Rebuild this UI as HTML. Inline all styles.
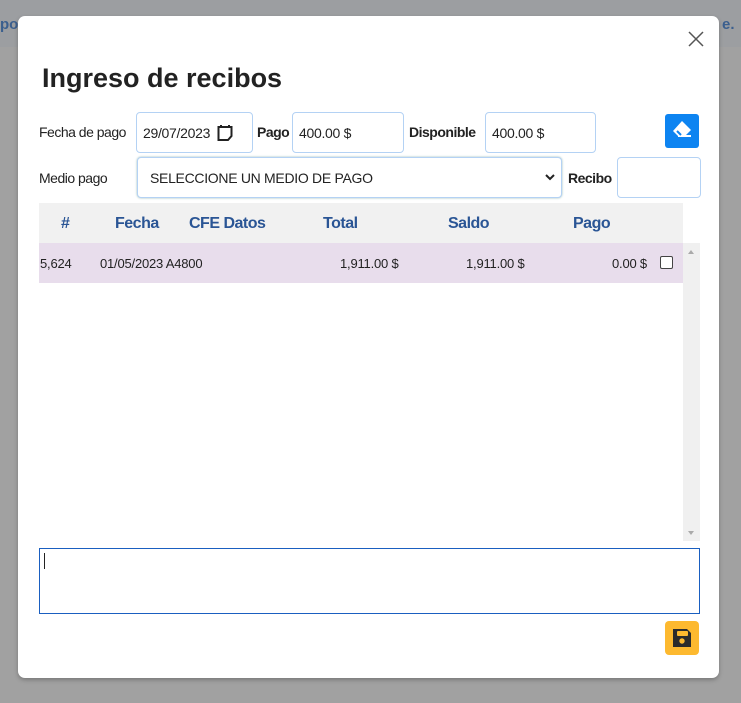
<!DOCTYPE html>
<html><head><style>
body{margin:0;width:741px;height:703px;background:#a1a1a1;position:relative;overflow:hidden;font-family:"Liberation Sans",sans-serif;}
.band{position:absolute;left:0;top:0;width:741px;height:47px;background:#9c9ea1;}
.modal{position:absolute;left:18px;top:16px;width:701px;height:662px;background:#fff;border-radius:7px;box-shadow:0 2px 4px rgba(0,0,0,.25);}
.a{position:absolute;}
.lbl{font-size:14px;color:#222;letter-spacing:-0.5px}
.inp{border:1px solid #b4d2f4;border-radius:4px;background:#fff;font-size:14px;color:#222;box-sizing:border-box;padding-left:6px;display:flex;align-items:center;letter-spacing:-0.3px}
.th{font-size:16px;font-weight:bold;color:#2a5595;top:215px;letter-spacing:-0.5px}
.td{font-size:13px;color:#222;top:256px;letter-spacing:-0.2px}
</style></head><body>
<div class="band"></div>
<div class="a" style="left:0;top:16px;font-size:15px;color:#3b5f8e;font-weight:bold">po</div>
<div class="a" style="left:722px;top:16px;font-size:15px;color:#3b5f8e;font-weight:bold">e.</div>
<div class="modal"></div>
<svg class="a" style="left:688px;top:31px" width="16" height="16"><path d="M1 1L15 15M15 1L1 15" stroke="#555" stroke-width="1.5"/></svg>
<div class="a" style="left:42px;top:63px;font-size:27px;font-weight:bold;color:#222">Ingreso de recibos</div>
<div class="a lbl" style="left:39px;top:124px">Fecha de pago</div>
<div class="a inp" style="left:136px;top:112px;width:117px;height:41px">29/07/2023
<svg style="margin-left:7px" width="16" height="18"><path d="M1.5 3H14.5V12L11 16H1.5Z" fill="none" stroke="#222" stroke-width="2"/><path d="M4 1v3M12 1v3" stroke="#222" stroke-width="2"/></svg></div>
<div class="a lbl" style="left:257px;top:124px;font-weight:bold">Pago</div>
<div class="a inp" style="left:292px;top:112px;width:112px;height:41px">400.00 $</div>
<div class="a lbl" style="left:409px;top:124px;font-weight:bold">Disponible</div>
<div class="a inp" style="left:485px;top:112px;width:111px;height:41px">400.00 $</div>
<div class="a" style="left:665px;top:114px;width:34px;height:34px;background:#0d84f1;border-radius:3px"></div>
<svg class="a" style="left:669px;top:118px" width="26" height="26"><path d="M13 3L22 12L16 18H9L4 13Z" fill="#fff"/><path d="M9 18H22" stroke="#fff" stroke-width="2"/><path d="M8 13L12 17" stroke="#0d84f1" stroke-width="2"/></svg>
<div class="a lbl" style="left:39px;top:170px">Medio pago</div>
<div class="a inp" style="left:137px;top:157px;width:425px;height:41px;padding-left:12px;box-shadow:0 0 2px #9bb">SELECCIONE UN MEDIO DE PAGO
<svg style="position:absolute;right:6px;top:16px" width="10" height="8"><path d="M1 1L5 5L9 1" stroke="#222" stroke-width="2" fill="none"/></svg></div>
<div class="a lbl" style="left:568px;top:170px;font-weight:bold">Recibo</div>
<div class="a inp" style="left:617px;top:157px;width:84px;height:41px"></div>
<div class="a" style="left:39px;top:203px;width:644px;height:40px;background:#f1f1f1"></div>
<div class="a th" style="left:61px">#</div>
<div class="a th" style="left:115px">Fecha</div>
<div class="a th" style="left:189px">CFE Datos</div>
<div class="a th" style="left:323px">Total</div>
<div class="a th" style="left:448px">Saldo</div>
<div class="a th" style="left:573px">Pago</div>
<div class="a" style="left:39px;top:243px;width:644px;height:40px;background:#e8ddec"></div>
<div class="a td" style="left:40px">5,624</div>
<div class="a td" style="left:100px">01/05/2023 A4800</div>
<div class="a td" style="left:340px">1,911.00 $</div>
<div class="a td" style="left:466px">1,911.00 $</div>
<div class="a td" style="left:612px">0.00 $</div>
<div class="a" style="left:660px;top:256px;width:11px;height:11px;border:1px solid #444;border-radius:2px;background:#fff"></div>
<div class="a" style="left:683px;top:243px;width:17px;height:298px;background:#f0f0f0"></div>
<div class="a" style="left:688px;top:250px;width:0;height:0;border:3px solid transparent;border-bottom:4px solid #aaa;border-top:0"></div>
<div class="a" style="left:688px;top:531px;width:0;height:0;border:3px solid transparent;border-top:4px solid #aaa;border-bottom:0"></div>
<div class="a" style="left:39px;top:548px;width:661px;height:66px;border:1px solid #1a5fc0;box-sizing:border-box"></div>
<div class="a" style="left:44px;top:553px;width:1px;height:16px;background:#222"></div>
<div class="a" style="left:665px;top:621px;width:34px;height:34px;background:#fdb92f;border-radius:4px"></div>
<svg class="a" style="left:671px;top:627px" width="22" height="22"><path d="M2 2H16L20 6V20H2Z" fill="#2b2b2b"/><rect x="6" y="4" width="11" height="5" rx="1" fill="#fdb92f"/><circle cx="11" cy="14" r="2.7" fill="#fdb92f"/></svg>
</body></html>
